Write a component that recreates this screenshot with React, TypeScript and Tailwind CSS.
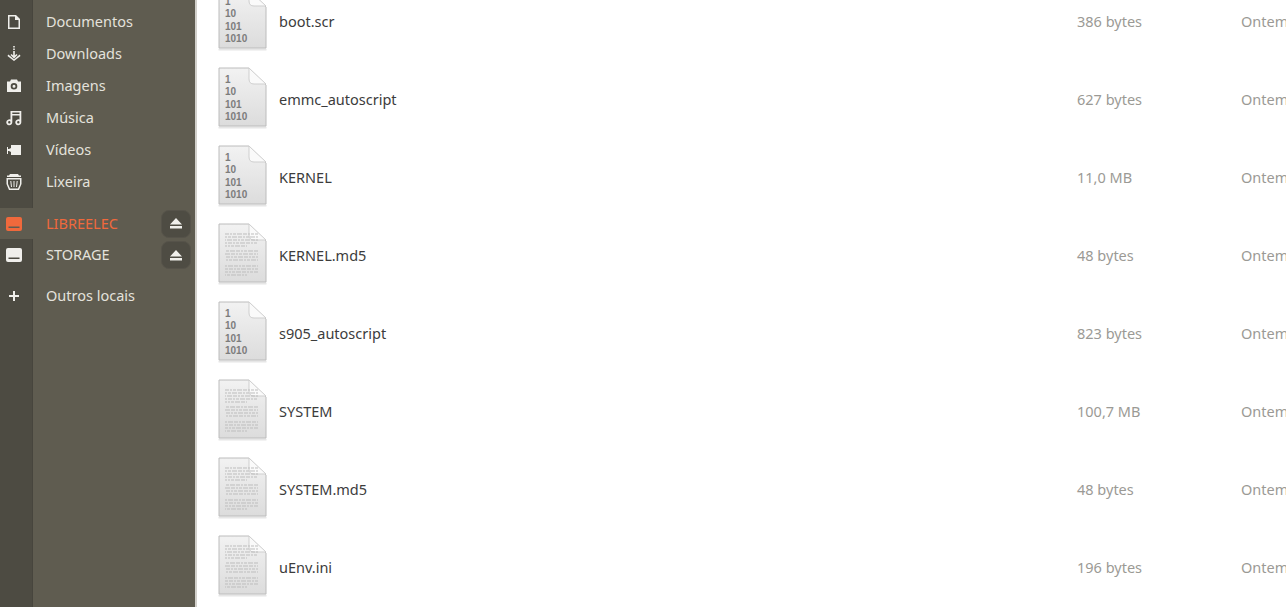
const places = [
  { label: 'Documentos', icon: 'doc' },
  { label: 'Downloads', icon: 'down' },
  { label: 'Imagens', icon: 'cam' },
  { label: 'Música', icon: 'music' },
  { label: 'Vídeos', icon: 'video' },
  { label: 'Lixeira', icon: 'trash' },
];

const files = [
  { name: 'boot.scr', size: '386 bytes', kind: 'bin' },
  { name: 'emmc_autoscript', size: '627 bytes', kind: 'bin' },
  { name: 'KERNEL', size: '11,0 MB', kind: 'bin' },
  { name: 'KERNEL.md5', size: '48 bytes', kind: 'txt' },
  { name: 's905_autoscript', size: '823 bytes', kind: 'bin' },
  { name: 'SYSTEM', size: '100,7 MB', kind: 'txt' },
  { name: 'SYSTEM.md5', size: '48 bytes', kind: 'txt' },
  { name: 'uEnv.ini', size: '196 bytes', kind: 'txt' },
];

// y positions of the text lines on the document icon, three paragraphs
const textLines = [11, 14, 17, 20, 23, 28, 31, 34, 37, 43, 46, 49, 52];

function PlaceIcon({ icon }: { icon: string }) {
  return (
    <svg width="16" height="16" viewBox="0 0 16 16" fill="#f0efeb">
      {icon === 'doc' && (
        <path fillRule="evenodd" d="M2 1h8l4 4v10H2zM3.500 2.500v11h9V6H9V2.500z" />
      )}
      {icon === 'down' && (
        <path d="M7.200 0h1.600v1.500H7.200zM7.200 2.500h1.600V4H7.200zM7.200 5h1.600v4.500L10.500 8l1 1L8 12.500 4.500 9l1-1 1.700 1.500zM2.300 8.500 8 13.200l5.700-4.700.8 1.500L8 15 1.500 10z" />
      )}
      {icon === 'cam' && (
        <path fillRule="evenodd" d="M5 1.500h6l1 2h3V14H1V3.500h3zM8 5a3.300 3.300 0 1 0 0 6.600A3.300 3.300 0 0 0 8 5zM8 6.800a1.500 1.500 0 1 1 0 3 1.500 1.500 0 0 1 0-3z" />
      )}
      {icon === 'music' && (
        <path fillRule="evenodd" d="M4.500 1h10.800v11.300a3 3 0 1 1-1.800-2.700V5.500H6.300v6.800a3 3 0 1 1-1.800-2.700zM6.300 2.600v1.300h7.200V2.600zM3.300 11.100a1.200 1.200 0 1 0 0 2.400 1.200 1.200 0 0 0 0-2.400zM12.300 11.100a1.200 1.200 0 1 0 0 2.400 1.200 1.200 0 0 0 0-2.400z" />
      )}
      {icon === 'video' && <path d="M5 3h10v10H5v-3L3 9H2v3H1V5h1v2h1l2-1z" />}
      {icon === 'trash' && (
        <path fillRule="evenodd" d="M4 0h8l1 1.500h2V3H1V1.500h2zM0.500 4h15v6l-2.500 6H3L.5 10zM2 5.500V10l2 4.500h8l2-4.500V5.500zM4.300 7h1l.7 6H5zM7.500 7h1v6h-1zM10.700 7h1L11 13h-1z" />
      )}
      {icon === 'plus' && <path d="M7 3h2v4h4v2H9v4H7V9H3V7h4z" />}
    </svg>
  );
}

function DriveIcon({ color }: { color: string }) {
  return (
    <svg width="16" height="14" viewBox="0 0 16 14">
      <path
        fillRule="evenodd"
        fill={color}
        d="M2 0h12a2 2 0 0 1 2 2v10a2 2 0 0 1-2 2H2a2 2 0 0 1-2-2V2a2 2 0 0 1 2-2zM2.500 9.500V11h11V9.500z"
      />
    </svg>
  );
}

function EjectButton() {
  return (
    <div className="mr-1 flex h-7 w-[30px] items-center justify-center rounded-lg border border-[#56534a] bg-[#4e4c43]">
      <svg width="12" height="11" viewBox="0 0 12 11" fill="#f0efeb">
        <path d="M6 0l6 6.500H0zM0 8h12v2.500H0z" />
      </svg>
    </div>
  );
}

function FileIcon({ kind }: { kind: string }) {
  return (
    <div className="relative -mt-1 h-[62px] w-[50px] shrink-0">
      <svg width="50" height="62" viewBox="0 0 50 62">
        <defs>
          <linearGradient id="sheet" x1="0" y1="0" x2="0" y2="1">
            <stop offset="0" stopColor="#f2f2f2" />
            <stop offset="1" stopColor="#dcdcdc" />
          </linearGradient>
        </defs>
        <path d="M0.500 60.500h48" stroke="#e6e6e6" strokeWidth="2" />
        <path d="M1 1h30l17 17v41H1z" fill="url(#sheet)" stroke="#bcbcbc" />
        <path d="M31 1v11q0 5 5 5h12z" fill="#fafafa" stroke="#cfcfcf" />
        {kind === 'txt' &&
          textLines.map((y, i) => (
            <path
              key={y}
              d={y === 23 || y === 52 ? `M7 ${y}h22` : `M7 ${y}h33`}
              stroke="#bdbdbd"
              strokeDasharray="4 1 2 1 3 1 5 1"
              strokeDashoffset={i * 5}
            />
          ))}
      </svg>
      {kind === 'bin' && (
        <div className="absolute left-[7px] top-[7px] font-['Liberation_Sans',sans-serif] text-[10px] leading-[12.300px] font-bold text-[#7c7c7c]">
          <div>1</div>
          <div>10</div>
          <div>101</div>
          <div>1010</div>
        </div>
      )}
    </div>
  );
}

function SideRow({
  icon,
  label,
  active,
  eject,
  height = 'h-8',
}: {
  icon?: React.ReactNode;
  label?: string;
  active?: boolean;
  eject?: boolean;
  height?: string;
}) {
  return (
    <div className={`flex shrink-0 items-center ${height}`}>
      <div
        className={`flex h-full w-[33px] shrink-0 items-center pl-1.5 ${
          active ? 'bg-[#5f5c50]' : 'border-r border-[#47453d] bg-[#4d4b42]'
        }`}
      >
        {icon}
      </div>
      <span className={`ml-[13px] flex-1 ${active ? 'text-[#f0693c]' : 'text-[#e4e2dc]'}`}>{label}</span>
      {eject && <EjectButton />}
    </div>
  );
}

export default function App() {
  return (
    <div className="flex h-[607px] w-[1286px] overflow-hidden bg-white font-['Noto_Sans',sans-serif] text-[14.500px]">
      <aside className="flex h-full w-[195px] shrink-0 flex-col bg-[#5f5c50]">
        <SideRow height="h-1.5" />
        {places.map((place) => (
          <SideRow key={place.label} icon={<PlaceIcon icon={place.icon} />} label={place.label} />
        ))}
        <SideRow height="h-2.5" />
        <SideRow height="h-[31px]" active eject icon={<DriveIcon color="#f0693c" />} label="LIBREELEC" />
        <SideRow eject icon={<DriveIcon color="#f0efeb" />} label="STORAGE" />
        <SideRow height="h-[9px]" />
        <SideRow icon={<PlaceIcon icon="plus" />} label="Outros locais" />
        <div className="min-h-0 flex-1">
          <div className="h-full w-[33px] border-r border-[#47453d] bg-[#4d4b42]" />
        </div>
      </aside>
      <main className="-mt-[17px] min-w-0 flex-1 border-l-2 border-[#d2d0cb]">
        {files.map((file) => (
          <div key={file.name} className="flex h-[78px] items-center overflow-hidden pl-[21px] whitespace-nowrap">
            <FileIcon kind={file.kind} />
            <span className="ml-[11px] w-[798px] shrink-0 text-[#3c3c3c]">{file.name}</span>
            <span className="w-[164px] shrink-0 text-[#9b9a95]">{file.size}</span>
            <span className="text-[#9b9a95]">Ontem</span>
          </div>
        ))}
      </main>
    </div>
  );
}
